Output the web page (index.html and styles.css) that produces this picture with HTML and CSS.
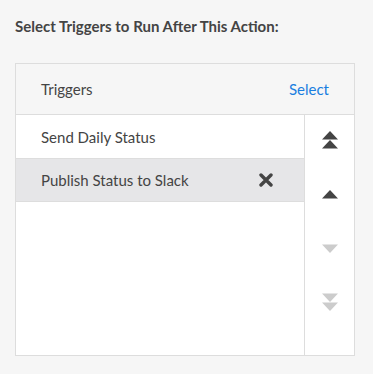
FILE: index.html
```
<!DOCTYPE html>
<html lang="en">
<head>
    <meta charset="UTF-8">
    <meta name="viewport" content="width=device-width, initial-scale=1.0">
    <title>Select Triggers</title>
    <link rel="stylesheet" href="styles.css">
</head>
<body>
    <h1 class="title">Select Triggers to Run After This Action:</h1>

    <div class="picker">
        <div class="picker-head">
            <span>Triggers</span>
            <a class="select-link" href="#">Select</a>
        </div>
        <div class="picker-body">
            <ul class="trigger-list">
                <li class="trigger">Send Daily Status</li>
                <li class="trigger selected">
                    <span>Publish Status to Slack</span>
                    <svg class="remove" width="14" height="14" viewBox="0 0 14 14">
                        <path d="M2 2 L12 12 M12 2 L2 12" stroke="#444" stroke-width="3.4" stroke-linecap="round"/>
                    </svg>
                </li>
            </ul>
            <div class="order-buttons">
                <button class="order-btn" title="Move to top">
                    <svg width="18" height="18" viewBox="0 0 18 18">
                        <polygon points="9,0 17,8.5 1,8.5" fill="#444"/>
                        <polygon points="9,9 17,17.5 1,17.5" fill="#444"/>
                    </svg>
                </button>
                <button class="order-btn" title="Move up">
                    <svg width="18" height="9" viewBox="0 0 18 9">
                        <polygon points="9,0 17,8.5 1,8.5" fill="#444"/>
                    </svg>
                </button>
                <button class="order-btn disabled" title="Move down">
                    <svg width="18" height="9" viewBox="0 0 18 9">
                        <polygon points="1,0.5 17,0.5 9,9" fill="#ccc"/>
                    </svg>
                </button>
                <button class="order-btn disabled" title="Move to bottom">
                    <svg width="18" height="18" viewBox="0 0 18 18">
                        <polygon points="1,0.5 17,0.5 9,9" fill="#ccc"/>
                        <polygon points="1,9.5 17,9.5 9,18" fill="#ccc"/>
                    </svg>
                </button>
            </div>
        </div>
    </div>
</body>
</html>
```

FILE: styles.css
```
body {
    font-family: Lato, "Open Sans", sans-serif;
    background-color: #f6f6f6;
    color: #444;
    margin: 0;
    padding: 15px;
}

.title {
    font-size: 15px;
    font-weight: bold;
    margin: 1px 0 0 0;
    line-height: 20px;
    color: #444;
}

.picker {
    margin-top: 27px;
    width: 338px;
    border: 1px solid #ddd;
    background-color: #fff;
}

.picker-head {
    display: flex;
    justify-content: space-between;
    align-items: center;
    height: 50px;
    padding: 0 25px 0 25px;
    background-color: #f6f6f6;
    border-bottom: 1px solid #ddd;
    font-size: 15px;
}

.select-link {
    color: #1a7ee0;
    text-decoration: none;
}

.picker-body {
    display: flex;
    height: 240px;
}

.trigger-list {
    flex: 1;
    list-style: none;
    margin: 0;
    padding: 0;
    border-right: 1px solid #ddd;
}

.trigger {
    display: flex;
    justify-content: space-between;
    align-items: center;
    height: 43px;
    padding: 0 31px 0 25px;
    font-size: 15px;
}

.trigger.selected {
    background-color: #e6e6e8;
    border-top: 1px solid #ddd;
    border-bottom: 1px solid #ddd;
    height: 42px;
}

.remove {
    display: block;
}

.order-buttons {
    width: 49px;
    display: flex;
    flex-direction: column;
    align-items: center;
    margin-top: -2px;
}

.order-btn {
    border: none;
    background: none;
    padding: 0;
    height: 54px;
    width: 30px;
    display: flex;
    justify-content: center;
    align-items: center;
    cursor: pointer;
}

.order-btn svg {
    display: block;
}
```
